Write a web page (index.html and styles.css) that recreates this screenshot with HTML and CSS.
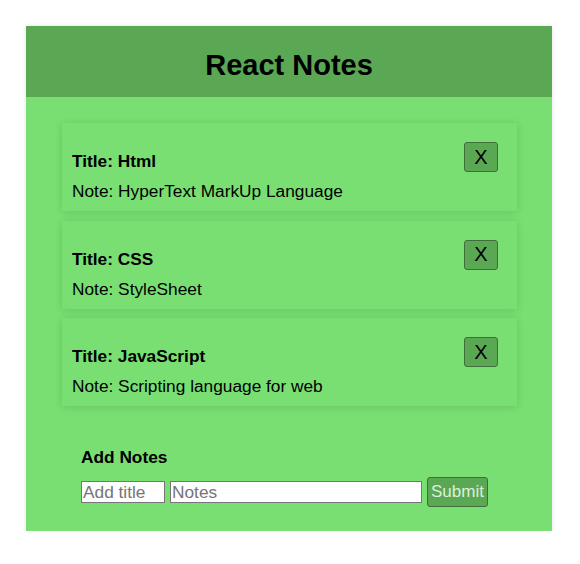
FILE: index.html
```html
<!DOCTYPE html>
<html>
<head>
<meta charset="utf-8">
<link rel="stylesheet" href="styles.css">
</head>
<body>
<div class="app">
  <header class="header"><h1 class="heading">React Notes</h1></header>
  <main class="content">
    <div class="notes">
      <div class="card">
        <div class="card-text">
          <div class="card-title">Title: Html</div>
          <div class="card-note">Note: HyperText MarkUp Language</div>
        </div>
        <button class="del">X</button>
      </div>
      <div class="card">
        <div class="card-text">
          <div class="card-title">Title: CSS</div>
          <div class="card-note">Note: StyleSheet</div>
        </div>
        <button class="del">X</button>
      </div>
      <div class="card">
        <div class="card-text">
          <div class="card-title">Title: JavaScript</div>
          <div class="card-note">Note: Scripting language for web</div>
        </div>
        <button class="del">X</button>
      </div>
    </div>
    <form class="add">
      <div class="add-title">Add Notes</div>
      <div class="add-row">
        <input class="in in-title" placeholder="Add title">
        <input class="in in-note" placeholder="Notes">
        <button type="button" class="submit">Submit</button>
      </div>
    </form>
  </main>
</div>
</body>
</html>
```
FILE: styles.css
```css
html, body { margin: 0; padding: 0; background: #fff; }
body { font-family: "Liberation Sans", Arial, sans-serif; color: #000; }
.app {
  width: 526px;
  margin: 26px 0 0 26px;
  background: #79df72;
  box-shadow: 0 0 4px rgba(0,0,0,0.12);
}
.header {
  height: 71px;
  background: #5aa854;
  display: flex;
  align-items: center;
  justify-content: center;
}
.heading {
  margin: 8px 0 0 0;
  font-size: 29px;
  font-weight: bold;
}
.content { padding: 26px 35px 0 36px; height: 434px; box-sizing: border-box; }
.notes { display: flex; flex-direction: column; gap: 9.5px; }
.card {
  height: 88px;
  box-sizing: border-box;
  padding: 0 19px 0 10px;
  display: flex;
  justify-content: space-between;
  align-items: flex-start;
  box-shadow: 0 1px 8px rgba(0,0,0,0.13);
  background: #79df72;
}
.card-text { padding-top: 28px; font-size: 17.3px; line-height: 20px; }
.card-title { font-weight: bold; }
.card-note { margin-top: 10px; }
.del {
  margin-top: 19px;
  width: 34px;
  height: 30px;
  background: #5aa854;
  border: 1px solid #3f6e3b;
  border-radius: 3px;
  font-family: "Liberation Sans", Arial, sans-serif;
  font-size: 20px;
  color: #000;
  padding: 0;
}
.add { padding: 41px 0 0 19px; }
.add-title { font-size: 17.3px; font-weight: bold; line-height: 20px; }
.add-row { display: flex; align-items: center; gap: 5px; margin-top: 10px; }
.in {
  height: 22px;
  box-sizing: border-box;
  border: 1px solid #767676;
  padding: 0 1px;
  font-family: "Liberation Sans", Arial, sans-serif;
  font-size: 17.3px;
  background: #fff;
}
.in::placeholder { color: #757575; }
.in-title { width: 84px; }
.in-note { width: 252px; }
.submit {
  width: 61px;
  height: 30px;
  background: #5aa854;
  border: 1px solid #3f6e3b;
  border-radius: 3px;
  color: #dcefdb;
  font-family: "Liberation Sans", Arial, sans-serif;
  font-size: 17px;
  padding: 0;
}
```
